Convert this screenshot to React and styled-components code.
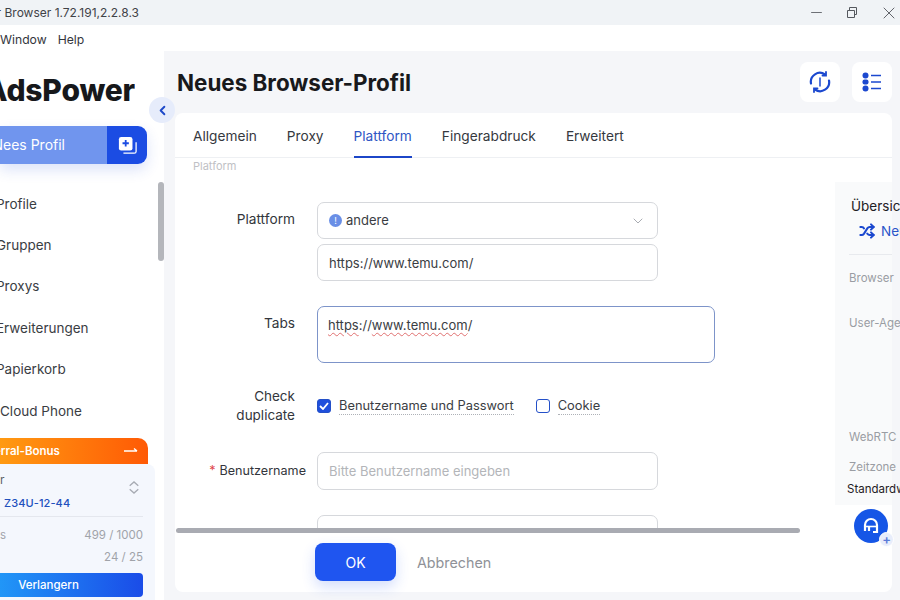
import React from "react";
import styled, { createGlobalStyle } from "styled-components";
import { ChevronDown, ChevronLeft, Minus, Shuffle, X } from "lucide-react";

const GlobalStyle = createGlobalStyle`
  html, body {
    margin: 0;
    width: 900px;
    height: 600px;
    overflow: hidden;
    background: #fff;
    font-family: Inter, "Liberation Sans", sans-serif;
    color: #2b2d33;
  }
  * { box-sizing: border-box; }
`;

const Window = styled.div`
  width: 900px;
  height: 600px;
  display: flex;
  flex-direction: column;
  overflow: hidden;
`;

const TitleBar = styled.div`
  height: 25px;
  flex: none;
  background: #f0f3f6;
  display: flex;
  align-items: center;
  justify-content: space-between;
  padding-right: 1px;
`;

const TitleText = styled.div`
  width: 139px;
  display: flex;
  justify-content: flex-end;
  overflow: hidden;
  white-space: nowrap;
  font-size: 12px;
  color: #3f4247;
  flex: none;
`;

const WindowControls = styled.div`
  display: flex;
  align-items: center;
  gap: 22px;
  color: #55585e;
`;

const MenuBar = styled.div`
  height: 26px;
  flex: none;
  display: flex;
  align-items: center;
  gap: 11px;
  font-size: 12.2px;
  padding-top: 2px;
  color: #33363c;
  background: #fff;
`;

const Body = styled.div`
  flex: 1;
  display: flex;
  min-height: 0;
`;

const Sidebar = styled.aside`
  width: 164px;
  flex: none;
  position: relative;
  z-index: 2;
  background: #fff;
  display: flex;
  flex-direction: column;
`;

const Logo = styled.div`
  width: 135px;
  height: 36px;
  margin-top: 21px;
  display: flex;
  justify-content: flex-end;
  align-items: center;
  overflow: hidden;
  white-space: nowrap;
  font-size: 30px;
  font-weight: 800;
  letter-spacing: -0.2px;
  color: #17181b;
`;

const NewProfile = styled.div`
  width: 147px;
  height: 38px;
  margin-top: 18px;
  display: flex;
  border-radius: 0 9px 9px 0;
  overflow: hidden;
  box-shadow: 0 6px 14px rgba(40, 80, 220, 0.16);
`;

const NewProfileLabel = styled.div`
  flex: 1;
  background: #7095ee;
  color: #fff;
  font-size: 14px;
  font-weight: 400;
  display: flex;
  align-items: center;
  justify-content: flex-end;
  padding: 0 42px 2px 0;
  overflow: hidden;
  white-space: nowrap;
`;

const NewProfileIcon = styled.div`
  width: 40px;
  background: #1b4ce3;
  display: flex;
  align-items: center;
  justify-content: center;
`;

const Nav = styled.nav`
  margin-top: 19px;
  display: flex;
  flex-direction: column;
`;

const NavItem = styled.div`
  height: 41.4px;
  display: flex;
  align-items: center;
  margin-left: ${(p) => (p.$flush ? 0 : -4)}px;
  font-size: 13.5px;
  color: #3a3d43;
`;

const SideScroll = styled.div`
  position: absolute;
  left: 158px;
  top: 131px;
  width: 6px;
  height: 79px;
  border-radius: 3px;
  background: #b4b6bb;
`;

const Collapse = styled.div`
  position: absolute;
  left: 149px;
  top: 46px;
  width: 26px;
  height: 26px;
  border-radius: 50%;
  background: #e6ecfb;
  color: #1d49c9;
  display: flex;
  align-items: center;
  justify-content: center;
`;

const Promo = styled.div`
  margin-top: 7px;
  flex: 1;
  display: flex;
  flex-direction: column;
  background: #fff;
`;

const PromoHead = styled.div`
  width: 148px;
  height: 26px;
  flex: none;
  border-radius: 0 10px 0 0;
  background: linear-gradient(90deg, #ff9a12, #ff5a05);
  color: #fff;
  font-size: 11.5px;
  font-weight: 600;
  display: flex;
  align-items: center;
  justify-content: space-between;
  padding-right: 10px;
  overflow: hidden;
  white-space: nowrap;
`;

const PromoTitle = styled.span`
  margin-left: -6px;
`;

const PromoBody = styled.div`
  width: 155px;
  flex: 1;
  background: #f4f7fd;
  border-radius: 0 8px 0 0;
  padding-right: 12px;
  font-size: 12px;
`;

const PlanRow = styled.div`
  height: 53px;
  position: relative;
  border-bottom: 1px solid #e4e7ee;
  padding-top: 8px;
  color: #5c5f66;
`;

const PlanName = styled.div`
  margin-top: 9px;
  padding-left: 4px;
  color: #2150bd;
  font-weight: 500;
  font-size: 11px;
  letter-spacing: 0.1px;
`;

const PlanChevrons = styled.div`
  position: absolute;
  right: 3px;
  top: 16px;
  display: flex;
`;

const UsageRow = styled.div`
  display: flex;
  justify-content: space-between;
  height: 22px;
  align-items: center;
  color: #a0a3a9;
  font-size: 11.5px;
`;

const Usage = styled.div`
  padding-top: 7px;
`;

const Renew = styled.div`
  width: 143px;
  height: 24px;
  margin-top: 5px;
  padding-right: 46px;
  border-radius: 0 4px 4px 0;
  background: linear-gradient(90deg, #2196f7, #1a4ce8);
  color: #fff;
  font-size: 11.5px;
  font-weight: 500;
  display: flex;
  align-items: center;
  justify-content: center;
`;

const Main = styled.main`
  flex: 1;
  min-width: 0;
  position: relative;
  background: #f5f6f9;
  display: flex;
  flex-direction: column;
  padding: 0 8px 8px 11px;
`;

const Header = styled.header`
  height: 62px;
  flex: none;
  display: flex;
  align-items: flex-start;
  justify-content: space-between;
  padding-top: 11px;
`;

const Title = styled.h1`
  margin: 4px 0 0 2px;
  font-size: 22.4px;
  line-height: 34px;
  font-weight: 700;
  color: #18191c;
`;

const HeaderActions = styled.div`
  display: flex;
  gap: 12px;
`;

const IconButton = styled.div`
  width: 40px;
  height: 40px;
  border-radius: 8px;
  background: #fff;
  display: flex;
  align-items: center;
  justify-content: center;
`;

const Card = styled.section`
  flex: 1;
  min-height: 0;
  position: relative;
  background: #fff;
  border-radius: 8px;
  display: flex;
  flex-direction: column;
`;

const Tabs = styled.div`
  height: 45px;
  flex: none;
  display: flex;
  gap: 30px;
  padding-left: 18px;
  border-bottom: 1px solid #eef0f3;
`;

const Tab = styled.div`
  height: 45px;
  display: flex;
  align-items: center;
  font-size: 13.7px;
  color: ${(p) => (p.$active ? "#2f56c4" : "#35383e")};
  box-shadow: ${(p) => (p.$active ? "inset 0 -2px 0 #1c46c8" : "none")};
`;

const Content = styled.div`
  flex: none;
  height: 373px;
  display: flex;
`;

const FormArea = styled.div`
  flex: 1;
  min-width: 0;
  overflow: hidden;
  height: 371px;
`;

const SectionHint = styled.div`
  padding: 1px 0 0 18px;
  height: 44px;
  font-size: 11px;
  color: #bfc1c5;
`;

const Row = styled.div`
  display: flex;
  margin-bottom: ${(p) => p.$gap}px;
`;

const Label = styled.div`
  width: ${(p) => (p.$wide ? 131 : 120)}px;
  margin-right: ${(p) => (p.$wide ? 11 : 22)}px;
  flex: none;
  text-align: right;
  font-size: ${(p) => (p.$wide ? 12.6 : 13.7)}px;
  line-height: 20px;
  padding-top: ${(p) => (p.$wide ? 9 : 7)}px;
  color: #33363c;
`;

const Required = styled.span`
  color: #e0474c;
  margin-right: 4px;
`;

const Fields = styled.div`
  display: flex;
  flex-direction: column;
  gap: 5px;
`;

const Field = styled.div`
  width: ${(p) => p.$width || 341}px;
  height: ${(p) => p.$height || 37}px;
  border: 1px solid ${(p) => (p.$focus ? "#7d94c9" : "#d6d8dc")};
  border-radius: 7px;
  background: #fff;
  display: flex;
  align-items: ${(p) => (p.$top ? "flex-start" : "center")};
  padding: ${(p) => (p.$top ? "8px 10px" : "0 11px")};
  font-size: 13px;
  line-height: 20px;
  color: ${(p) => (p.$muted ? "#b3b5b9" : "#3a3d43")};
`;

const SelectValue = styled.div`
  flex: 1;
  display: flex;
  align-items: center;
  gap: 4px;
  padding-bottom: 1px;
`;

const Dot = styled.span`
  width: 13px;
  height: 13px;
  border-radius: 50%;
  background: #6a8fe6;
  color: #fff;
  font-size: 9px;
  line-height: 13px;
  text-align: center;
`;

const Spell = styled.span`
  text-decoration: underline wavy #e07070 1px;
  text-underline-offset: 2px;
`;

const CheckLabel = styled.div`
  width: 120px;
  margin-right: 22px;
  flex: none;
  padding-top: 1px;
  text-align: right;
  font-size: 13.5px;
  line-height: 19px;
  color: #33363c;
`;

const Checks = styled.div`
  display: flex;
  align-items: center;
  height: 40px;
  gap: 22px;
`;

const Check = styled.div`
  display: flex;
  align-items: center;
  gap: 8px;
  font-size: 12.85px;
  color: #3a3d43;
`;

const Box = styled.span`
  width: 14px;
  height: 14px;
  border-radius: 3px;
  border: 1.5px solid #2450c8;
  background: ${(p) => (p.$on ? "#1f4fdc" : "#fff")};
  display: flex;
  align-items: center;
  justify-content: center;
`;

const Dotted = styled.span`
  border-bottom: 1px dotted #aeb1b7;
  line-height: 16px;
`;

const Overview = styled.div`
  width: 57px;
  height: 323px;
  flex: none;
  margin-top: 24px;
  background: #f9fafb;
  padding: 15px 0 0 16px;
  white-space: nowrap;
  font-size: 11.5px;
  color: #9a9da3;
`;

const OverviewTitle = styled.div`
  font-size: 13.5px;
  color: #1f2024;
  line-height: 18px;
`;

const NewPrint = styled.div`
  margin: 8px 0 0 8px;
  width: max-content;
  display: flex;
  align-items: center;
  gap: 6px;
  font-size: 13.5px;
  color: #2a55c9;
`;

const OverviewRule = styled.div`
  width: 43px;
  height: 1px;
  margin: 15px 0 15px -2px;
  background: #e8eaee;
`;

const OverviewLabel = styled.div`
  margin: ${(p) => p.$top || 0}px 0 0 -2px;
  line-height: 16px;
`;

const OverviewValue = styled.div`
  margin: 6px 0 0 -4px;
  line-height: 16px;
  color: #1f2024;
`;

const ScrollBar = styled.div`
  position: absolute;
  left: 1px;
  top: 415px;
  width: 624px;
  height: 5px;
  border-radius: 3px;
  background: #a9abb2;
`;

const Footer = styled.div`
  flex: 1;
  display: flex;
  align-items: flex-start;
  gap: 21px;
  padding: 12px 0 0 140px;
`;

const OkButton = styled.div`
  width: 81px;
  height: 38px;
  border-radius: 8px;
  background: #1f55f0;
  color: #fff;
  font-size: 14px;
  display: flex;
  align-items: center;
  justify-content: center;
  box-shadow: 0 6px 14px rgba(40, 90, 240, 0.2);
`;

const CancelButton = styled.div`
  height: 38px;
  display: flex;
  align-items: center;
  font-size: 14.3px;
  color: #8f9298;
`;

const HelpFab = styled.div`
  position: absolute;
  left: 690px;
  top: 458px;
  width: 34px;
  height: 34px;
  border-radius: 50%;
  background: #1656e6;
  display: flex;
  align-items: center;
  justify-content: center;
`;

const HelpPlus = styled.div`
  position: absolute;
  left: 25px;
  top: 23px;
  width: 15px;
  height: 15px;
  border-radius: 50%;
  background: #e8edfb;
  border: 1px solid #fff;
  color: #5a7bd8;
  font-size: 13px;
  line-height: 12px;
  font-weight: 600;
  text-align: center;
`;

const RestoreIcon = () => (
  <svg width="10" height="11" viewBox="0 0 10 11" fill="none" stroke="#55585e" strokeWidth="1">
    <path d="M.5 3.5h7v7h-7z" />
    <path d="M2.5 3V.5h7v7H8" />
  </svg>
);

const CopyPlusIcon = () => (
  <svg width="19" height="19" viewBox="0 0 21 21" fill="none">
    <path d="M6 19h12a2 2 0 0 0 2-2V7" stroke="#fff" strokeWidth="1.4" />
    <rect x="1" y="1" width="15" height="15" rx="2.5" fill="#fff" />
    <path d="M8.5 4.5v7M5 8h7" stroke="#1b4ce3" strokeWidth="2" />
  </svg>
);

const SyncIcon = () => (
  <svg width="22" height="22" viewBox="0 0 22 22" fill="none" stroke="#1b48cf" strokeWidth="2.2" strokeLinecap="round">
    <path d="M2 12.5A9 9 0 0 1 16 3.5" />
    <path d="M20 9.5A9 9 0 0 1 6 18.5" />
    <path d="M17 1v3.5h-3.5M5 21v-3.5h3.5" strokeWidth="1.8" />
    <path d="M11 7v8" strokeWidth="1.5" />
  </svg>
);

const ListIcon = () => (
  <svg width="20" height="20" viewBox="0 0 20 20" fill="#1b48cf">
    <circle cx="3.5" cy="3.5" r="3" />
    <rect x="0.5" y="7.5" width="6" height="5" rx="2" />
    <circle cx="3.5" cy="16.5" r="3" />
    <path d="M9 2.7h10v1.6H9zM9 9.2h10v1.6H9zM9 15.7h10v1.6H9z" />
  </svg>
);

const UpDownIcon = () => (
  <svg width="12" height="15" viewBox="0 0 14 16" fill="none" stroke="#a7abb3" strokeWidth="1.5">
    <path d="M2 6l5-4.5L12 6M2 10l5 4.5 5-4.5" />
  </svg>
);

const LongArrow = () => (
  <svg width="14" height="8" viewBox="0 0 14 8" fill="none" stroke="#fff" strokeWidth="1.4">
    <path d="M0 4h13M10 1.5L13 4" />
  </svg>
);

const CheckMark = () => (
  <svg width="10" height="8" viewBox="0 0 10 8" fill="none" stroke="#fff" strokeWidth="1.8">
    <path d="M1 4l3 3 5-6" />
  </svg>
);

const HeadsetIcon = () => (
  <svg width="18" height="18" viewBox="0 0 18 18" fill="none" stroke="#fff" strokeWidth="2.2">
    <path d="M3 14V8a6 6 0 0 1 12 0v7h-4" />
    <path d="M3.5 9.5h11" strokeWidth="1.6" />
    <path d="M7 10v4" />
  </svg>
);

const tabs = ["Allgemein", "Proxy", "Plattform", "Fingerabdruck", "Erweitert"];
const navItems = ["Profile", "Gruppen", "Proxys", "Erweiterungen", "Papierkorb", "Cloud Phone"];

export default function App() {
  return (
    <Window>
      <GlobalStyle />
      <TitleBar>
        <TitleText>AdsPower Browser 1.72.191,2.2.8.3</TitleText>
        <WindowControls>
          <Minus size={17} strokeWidth={1.2} />
          <RestoreIcon />
          <X size={20} strokeWidth={1.1} />
        </WindowControls>
      </TitleBar>
      <MenuBar>
        <span>Window</span>
        <span>Help</span>
      </MenuBar>
      <Body>
        <Sidebar>
          <Logo>AdsPower</Logo>
          <NewProfile>
            <NewProfileLabel>Nees Profil</NewProfileLabel>
            <NewProfileIcon>
              <CopyPlusIcon />
            </NewProfileIcon>
          </NewProfile>
          <Nav>
            {navItems.map((item) => (
              <NavItem key={item} $flush={item === "Cloud Phone"}>
                {item}
              </NavItem>
            ))}
          </Nav>
          <Promo>
            <PromoHead>
              <PromoTitle>erral-Bonus</PromoTitle>
              <LongArrow />
            </PromoHead>
            <PromoBody>
              <PlanRow>
                <div>r</div>
                <PlanName>Z34U-12-44</PlanName>
                <PlanChevrons>
                  <UpDownIcon />
                </PlanChevrons>
              </PlanRow>
              <Usage>
                <UsageRow>
                  <span>s</span>
                  <span>499 / 1000</span>
                </UsageRow>
                <UsageRow>
                  <span />
                  <span>24 / 25</span>
                </UsageRow>
              </Usage>
              <Renew>Verlangern</Renew>
            </PromoBody>
          </Promo>
          <SideScroll />
          <Collapse>
            <ChevronLeft size={15} strokeWidth={3} />
          </Collapse>
        </Sidebar>
        <Main>
          <Header>
            <Title>Neues Browser-Profil</Title>
            <HeaderActions>
              <IconButton>
                <SyncIcon />
              </IconButton>
              <IconButton>
                <ListIcon />
              </IconButton>
            </HeaderActions>
          </Header>
          <Card>
            <Tabs>
              {tabs.map((tab) => (
                <Tab key={tab} $active={tab === "Plattform"}>
                  {tab}
                </Tab>
              ))}
            </Tabs>
            <Content>
              <FormArea>
                <SectionHint>Platform</SectionHint>
                <Row $gap={25}>
                  <Label>Plattform</Label>
                  <Fields>
                    <Field>
                      <SelectValue>
                        <Dot>!</Dot>
                        andere
                      </SelectValue>
                      <ChevronDown size={16} color="#a9acb2" strokeWidth={1.5} />
                    </Field>
                    <Field>https://www.temu.com/</Field>
                  </Fields>
                </Row>
                <Row $gap={23}>
                  <Label>Tabs</Label>
                  <Field $width={398} $height={57} $focus $top>
                    <span>
                      <Spell>https</Spell>://<Spell>www.temu.com</Spell>/
                    </span>
                  </Field>
                </Row>
                <Row $gap={26}>
                  <CheckLabel>
                    Check
                    <br />
                    duplicate
                  </CheckLabel>
                  <Checks>
                    <Check>
                      <Box $on>
                        <CheckMark />
                      </Box>
                      <Dotted>Benutzername und Passwort</Dotted>
                    </Check>
                    <Check>
                      <Box />
                      <Dotted>Cookie</Dotted>
                    </Check>
                  </Checks>
                </Row>
                <Row $gap={25}>
                  <Label $wide>
                    <Required>*</Required>Benutzername
                  </Label>
                  <Field $height={38} $muted>
                    Bitte Benutzername eingeben
                  </Field>
                </Row>
                <Row $gap={0}>
                  <Label $wide>
                    <Required>*</Required>Passwort
                  </Label>
                  <Field $height={38}>00:00</Field>
                </Row>
              </FormArea>
              <Overview>
                <OverviewTitle>Übersicht</OverviewTitle>
                <NewPrint>
                  <Shuffle size={16} strokeWidth={3} color="#1b48cf" />
                  Neuer Fingerabdruck
                </NewPrint>
                <OverviewRule />
                <OverviewLabel>Browser</OverviewLabel>
                <OverviewLabel $top={29}>User-Agent</OverviewLabel>
                <OverviewLabel $top={98}>WebRTC</OverviewLabel>
                <OverviewLabel $top={14}>Zeitzone</OverviewLabel>
                <OverviewValue>Standardwert</OverviewValue>
              </Overview>
            </Content>
            <ScrollBar />
            <Footer>
              <OkButton>OK</OkButton>
              <CancelButton>Abbrechen</CancelButton>
            </Footer>
          </Card>
          <HelpFab>
            <HeadsetIcon />
            <HelpPlus>+</HelpPlus>
          </HelpFab>
        </Main>
      </Body>
    </Window>
  );
}
